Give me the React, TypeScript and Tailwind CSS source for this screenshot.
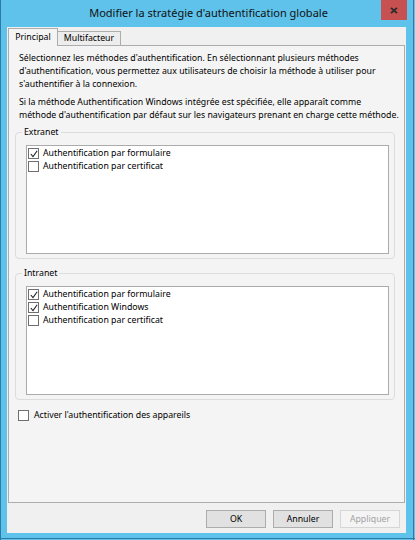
const font = { fontFamily: '"Noto Sans", "Open Sans", sans-serif' };

function Check({ checked }: { checked?: boolean }) {
  return (
    <span className="w-[11px] h-[11px] border border-[#6f6f6f] bg-white flex items-center justify-center shrink-0">
      {checked && (
        <svg width="8" height="8" viewBox="0 0 8 8">
          <path d="M0.8 4 L3 6.6 L7.2 0.8" fill="none" stroke="#222" strokeWidth="1.1" />
        </svg>
      )}
    </span>
  );
}

function Item({ label, checked }: { label: string; checked?: boolean }) {
  return (
    <div className="flex items-center gap-[4px] h-[13px]">
      <Check checked={checked} />
      <span className="leading-[13px] whitespace-nowrap">{label}</span>
    </div>
  );
}

function Group({ title, children }: { title: string; children: React.ReactNode }) {
  return (
    <div className="relative ml-[6px] mr-[9px] border border-[#dcdcdc] rounded-[4px] pl-[10px] pr-[5px] pt-[12px] pb-[4px]">
      <span className="absolute -top-[7px] left-[6px] bg-[#f4f4f4] px-[2px] leading-[13px]">{title}</span>
      <div className="bg-white border border-[#ababab] h-[109px] pt-px pl-px">
        <div className="flex flex-col">{children}</div>
      </div>
    </div>
  );
}

export default function App() {
  return (
    <div className="w-[415px] h-[540px] bg-[#5ec2ea] relative overflow-hidden text-[8.75px] text-black" style={font}>
      <div className="absolute left-0 top-0 bottom-0 w-px bg-[#2c7aa6]" />
      <div className="absolute left-0 right-0 bottom-[1px] h-px bg-[#2c7aa6]" />
      <div className="absolute right-[1px] top-0 bottom-0 w-px bg-[#2c7aa6]" />
      <div className="h-[27px] flex items-center justify-center relative">
        <span className="text-[11px] text-[#111] -mt-[1px] pl-[2px]">Modifier la stratégie d'authentification globale</span>
        <div className="absolute left-[381px] top-0 w-[26px] h-[20px] bg-[#c75050] flex items-center justify-center">
          <svg width="8" height="7" viewBox="0 0 8 7">
            <path d="M1 0.8 L7 6.2 M7 0.8 L1 6.2" stroke="#2a2a2a" strokeWidth="1.8" />
          </svg>
        </div>
      </div>
      <div className="ml-[7px] w-[399px] h-[506px] bg-[#f0f0f0] flex flex-col pl-[1px] pr-[1px]">
        <div className="flex items-end h-[18px] pt-px">
          <div className="h-[18px] w-[50px] bg-[#f4f4f4] border border-b-0 border-[#adadad] flex items-center justify-center relative z-10 -mb-px">
            Principal
          </div>
          <div className="h-[14px] w-[63px] bg-[#ededed] border border-l-0 border-b-0 border-[#adadad] flex items-center justify-center">
            Multifacteur
          </div>
        </div>
        <div className="h-[458px] bg-[#f4f4f4] border border-[#adadad] flex flex-col pt-[6px]">
          <p className="pl-[10px] leading-[13px] whitespace-nowrap">
            Sélectionnez les méthodes d'authentification. En sélectionnant plusieurs méthodes
            <br />
            d'authentification, vous permettez aux utilisateurs de choisir la méthode à utiliser pour
            <br />
            s'authentifier à la connexion.
          </p>
          <p className="pl-[10px] leading-[13px] mt-[5px] whitespace-nowrap">
            Si la méthode Authentification Windows intégrée est spécifiée, elle apparaît comme
            <br />
            méthode d'authentification par défaut sur les navigateurs prenant en charge cette méthode.
          </p>
          <div className="mt-[10px]">
            <Group title="Extranet">
              <Item label="Authentification par formulaire" checked />
              <Item label="Authentification par certificat" />
            </Group>
          </div>
          <div className="mt-[14px]">
            <Group title="Intranet">
              <Item label="Authentification par formulaire" checked />
              <Item label="Authentification Windows" checked />
              <Item label="Authentification par certificat" />
            </Group>
          </div>
          <div className="flex items-center gap-[5px] pl-[9px] mt-[9px] h-[13px]">
            <Check />
            <span className="leading-[13px]">Activer l'authentification des appareils</span>
          </div>
        </div>
        <div className="flex justify-end gap-[7px] mt-[7px] pr-[5px]">
          <button className="w-[60px] h-[18px] bg-[#e1e1e1] border border-[#acacac] text-black text-[8.75px] leading-none" style={font}>OK</button>
          <button className="w-[60px] h-[18px] bg-[#e1e1e1] border border-[#acacac] text-black text-[8.75px] leading-none" style={font}>Annuler</button>
          <button className="w-[60px] h-[18px] bg-[#f4f4f4] border border-[#d6d6d6] text-[#a3a3a3] text-[8.75px] leading-none" style={font}>Appliquer</button>
        </div>
      </div>
    </div>
  );
}
